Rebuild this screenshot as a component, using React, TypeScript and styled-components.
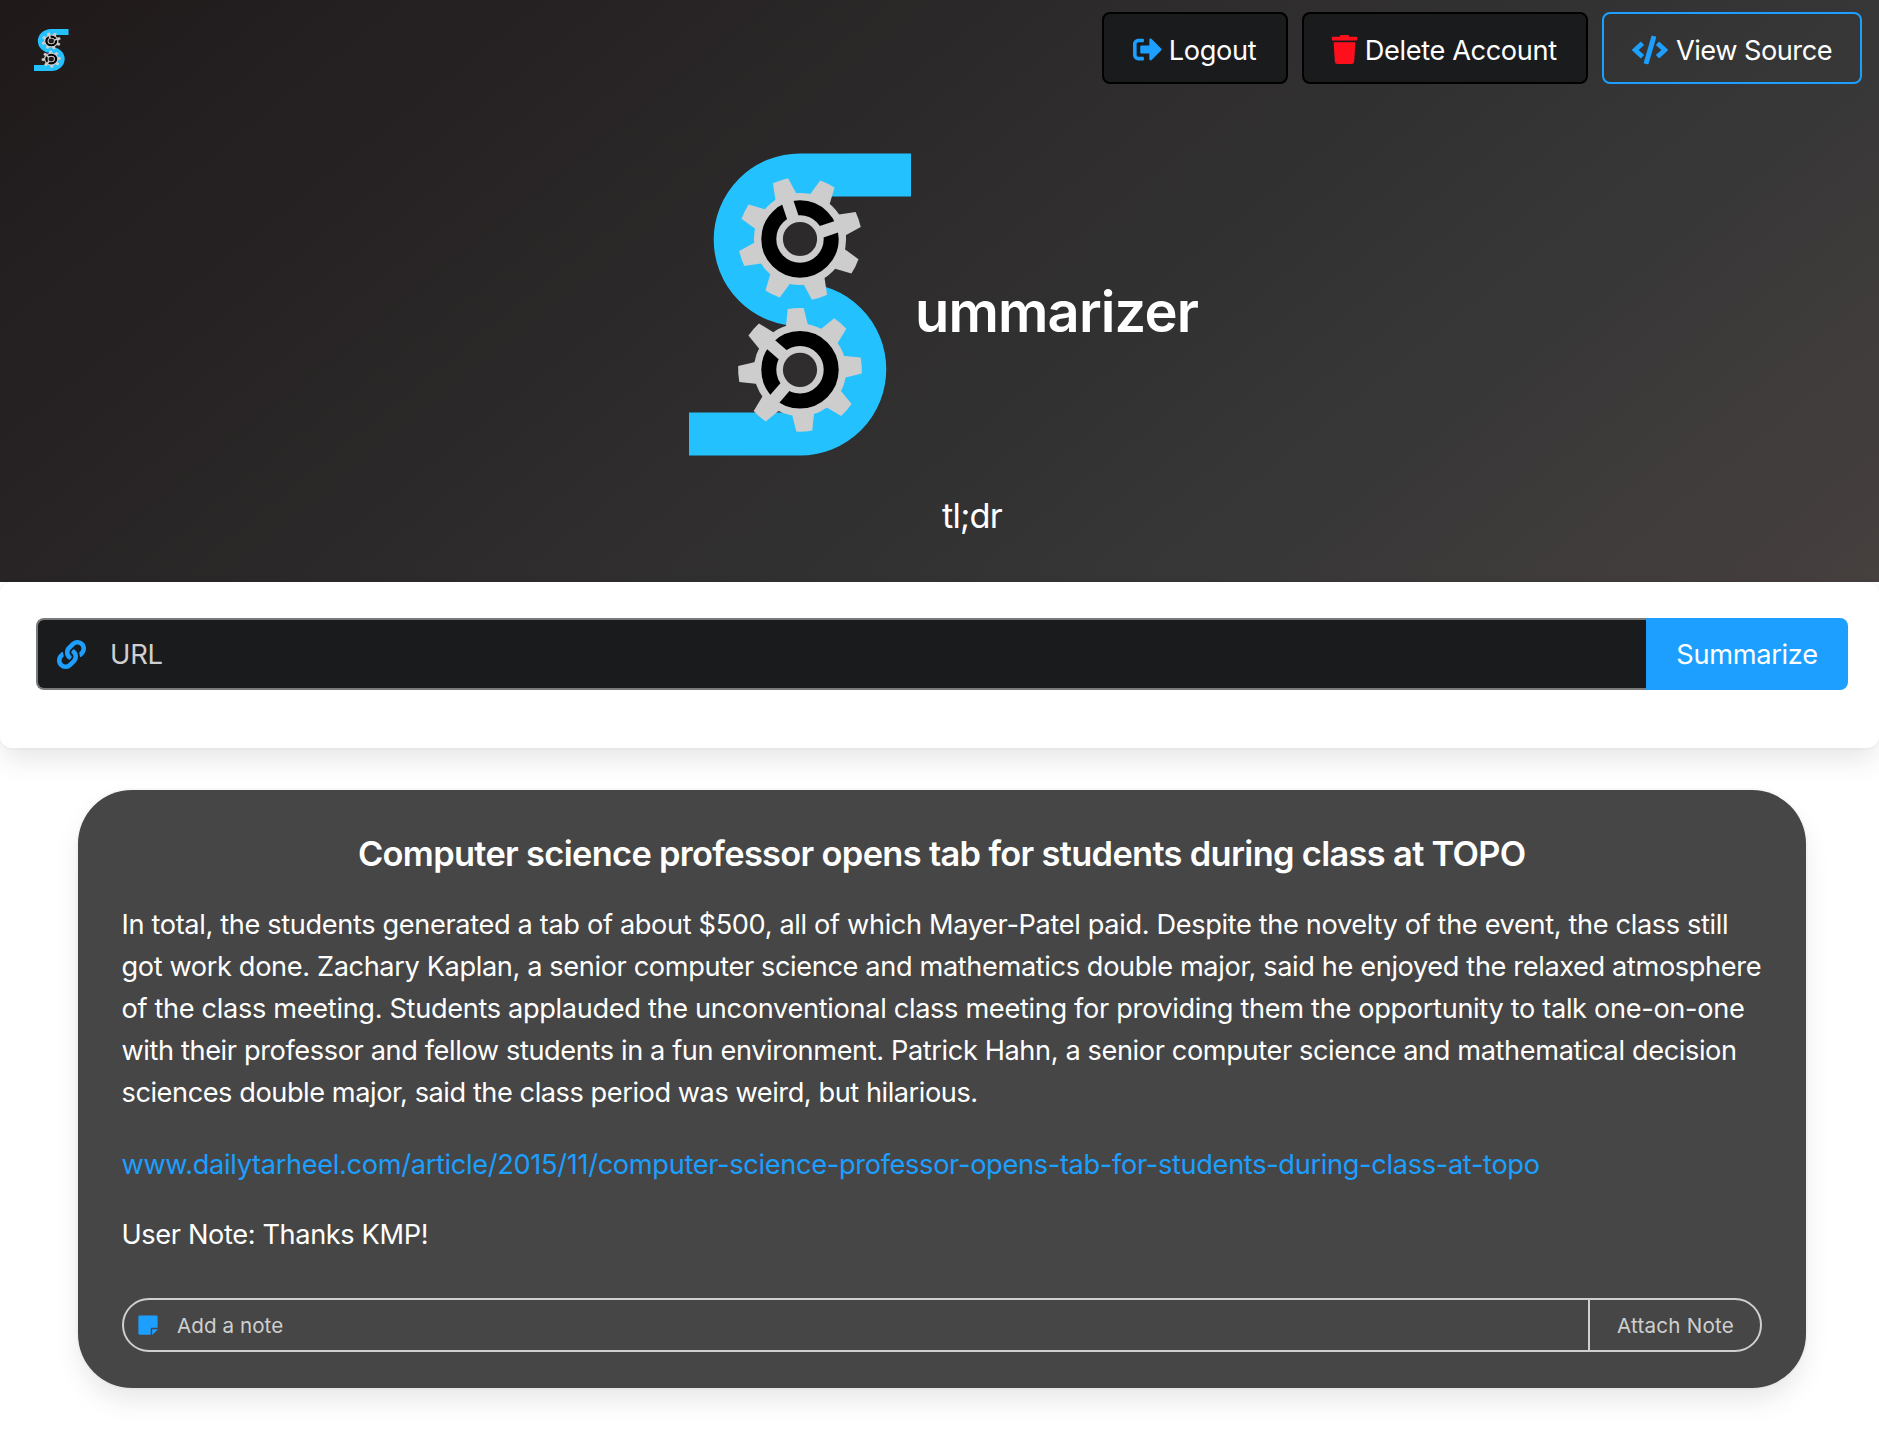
import React from 'react';
import styled, { createGlobalStyle } from 'styled-components';
import { FaSignOutAlt, FaTrash, FaCode, FaLink, FaStickyNote } from 'react-icons/fa';

const GlobalStyle = createGlobalStyle`
  *, *::before, *::after { box-sizing: border-box; }
  body {
    margin: 0;
    background: #fff;
    color: #fff;
    font-family: Inter, "Liberation Sans", sans-serif;
    font-size: 27.2px;
    line-height: 42px;
    -webkit-font-smoothing: antialiased;
  }
`;

const Page = styled.div`
  min-height: 1440px;
  padding-bottom: 52px;
`;

const Hero = styled.header`
  height: 582px;
  padding: 12px 17px 0 34px;
  background: linear-gradient(141deg, #1f191a 0%, #363636 71%, #46403f 100%);
`;

const NavBar = styled.nav`
  display: flex;
  justify-content: space-between;
  height: 72px;
`;

const Brand = styled.a`
  padding-top: 16.5px;
  line-height: 0;
`;

const NavButtons = styled.div`
  display: flex;
  gap: 14px;
`;

const NavButton = styled.button<{ $outlined?: boolean; $width: number; $spacing: number; $endPad?: number }>`
  display: flex;
  align-items: center;
  justify-content: center;
  width: ${(p) => p.$width}px;
  height: 72px;
  padding: 5px ${(p) => p.$endPad ?? 0}px 0 0;
  border: 2px solid ${(p) => (p.$outlined ? '#1c9fff' : '#000')};
  border-radius: 8px;
  background: ${(p) => (p.$outlined ? 'transparent' : '#1a1b1d')};
  color: #fff;
  font: inherit;
  letter-spacing: ${(p) => p.$spacing}px;
  white-space: pre;
`;

const ButtonIcon = styled.span<{ $color: string; $gap: number }>`
  display: flex;
  margin-right: ${(p) => p.$gap}px;
  padding-bottom: 2px;
  color: ${(p) => p.$color};
  font-size: 29px;
`;

const HeroTitle = styled.h1`
  display: flex;
  align-items: flex-start;
  margin: 68.6px 0 0 655px;
  font-size: 56px;
  font-weight: 600;
  line-height: 64px;
`;

const TitleText = styled.span`
  margin: 127px 0 0 4px;
  letter-spacing: -0.85px;
`;

const Tagline = styled.p`
  margin: 36.4px 0 0 908px;
  font-size: 34.4px;
  line-height: 48px;
  letter-spacing: -0.8px;
`;

const raised = `
  box-shadow: 0 14px 28px -3.5px rgba(10, 10, 10, 0.1), 0 0 0 2px rgba(10, 10, 10, 0.02);
`;

const SearchBox = styled.section`
  height: 166px;
  padding: 36px 31px 0 36px;
  border-radius: 12px;
  background: #fff;
  ${raised}
`;

const SearchForm = styled.form`
  display: flex;
  height: 72px;
`;

const UrlField = styled.label`
  flex: 1;
  display: flex;
  align-items: center;
  padding-left: 19px;
  border: 2px solid #7a7a7a;
  border-right: 0;
  border-radius: 8px 0 0 8px;
  background: #1a1b1d;
  color: #1c9fff;
  font-size: 29px;
`;

const TextInput = styled.input<{ $size: number; $indent: number; $spacing: number }>`
  flex: 1;
  min-width: 0;
  padding: 0 0 0 ${(p) => p.$indent}px;
  border: 0;
  outline: 0;
  background: transparent;
  color: #fff;
  font-family: inherit;
  font-size: ${(p) => p.$size}px;
  letter-spacing: ${(p) => p.$spacing}px;
  &::placeholder { color: #cfcfcf; opacity: 1; }
`;

const SummarizeButton = styled.button`
  width: 202px;
  padding: 2px 0 0;
  border: 0;
  border-radius: 0 8px 8px 0;
  background: #1c9fff;
  color: #fff;
  font: inherit;
  letter-spacing: -0.3px;
`;

const Card = styled.article`
  height: 598px;
  margin: 42px 73px 0 78px;
  padding: 42px 44px 0 43.5px;
  border-radius: 54px;
  background: #464646;
  ${raised}
`;

const CardTitle = styled.h2`
  margin: 0 0 28px;
  font-size: 34.4px;
  font-weight: 600;
  line-height: 44px;
  text-align: center;
  letter-spacing: -0.67px;
  white-space: nowrap;
`;

const Line = styled.span<{ $spacing: number }>`
  display: block;
  white-space: nowrap;
  letter-spacing: ${(p) => p.$spacing}px;
`;

const Paragraph = styled.p<{ $gap?: number }>`
  margin: 0 0 ${(p) => p.$gap ?? 28}px;
`;

const SourceLink = styled.a`
  color: #1c9fff;
  text-decoration: none;
`;

const NoteForm = styled.form`
  display: flex;
  height: 54px;
  margin-top: 42px;
  border: 2px solid #cfcfcf;
  border-radius: 27px;
  overflow: hidden;
`;

const NoteField = styled.label`
  flex: 1;
  display: flex;
  align-items: center;
  padding-left: 13px;
  color: #1c9fff;
  font-size: 22px;
`;

const AttachButton = styled.button`
  width: 172px;
  padding: 0 0 0 1px;
  border: 0;
  border-left: 2px solid #cfcfcf;
  background: transparent;
  color: #cfcfcf;
  font-family: inherit;
  font-size: 20.6px;
  letter-spacing: 0.2px;
`;

const Gear = ({ y, angle, spokes }: { y: number; angle: number; spokes: number[] }) => (
  <g transform={`translate(111 ${y})`}>
    <circle r="31.2" fill="none" stroke="#000" strokeWidth="16" />
    <circle r="42.4" fill="none" stroke="#cdcdcd" strokeWidth="7.4" />
    <circle r="20.4" fill="none" stroke="#cdcdcd" strokeWidth="6.6" />
    {Array.from({ length: 8 }, (_, i) => (
      <path
        key={i}
        transform={`rotate(${angle + i * 45})`}
        d="M43 -11.2 L61.4 -8 Q62.3 0 61.4 8 L43 11.2 Z"
        fill="#cdcdcd"
      />
    ))}
    {spokes.map((a) => (
      <path key={a} transform={`rotate(${a})`} d="M22 -6 H42 V6 H22 Z" fill="#cdcdcd" />
    ))}
  </g>
);

const Logo = ({ width, height }: { width: number; height: number }) => (
  <svg width={width} height={height} viewBox="0 0 222 303" preserveAspectRatio="none" overflow="visible">
    <path
      d="M222 21.9 H111 A64.8 64.8 0 0 0 111 151.5 A64.8 64.8 0 0 1 111 281.1 H0"
      fill="none"
      stroke="#23c2ff"
      strokeWidth="43"
    />
    <Gear y={86} angle={-18.5} spokes={[-108.5, -18.5]} />
    <Gear y={216.8} angle={-4} spokes={[-139, 131]} />
  </svg>
);

const summary: [string, number][] = [
  ['In total, the students generated a tab of about $500, all of which Mayer-Patel paid. Despite the novelty of the event, the class still', -0.36],
  ['got work done. Zachary Kaplan, a senior computer science and mathematics double major, said he enjoyed the relaxed atmosphere', -0.382],
  ['of the class meeting. Students applauded the unconventional class meeting for providing them the opportunity to talk one-on-one', -0.337],
  ['with their professor and fellow students in a fun environment. Patrick Hahn, a senior computer science and mathematical decision', -0.394],
  ['sciences double major, said the class period was weird, but hilarious.', -0.45],
];

export default function App() {
  return (
    <Page>
      <GlobalStyle />
      <Hero>
        <NavBar>
          <Brand><Logo width={34.5} height={42} /></Brand>
          <NavButtons>
            <NavButton $width={186} $spacing={-0.35} $endPad={1}>
              <ButtonIcon $color="#1c9fff" $gap={7}><FaSignOutAlt /></ButtonIcon>Logout
            </NavButton>
            <NavButton $width={286} $spacing={-0.38} $endPad={3}>
              <ButtonIcon $color="#ff0f1c" $gap={5.5}><FaTrash /></ButtonIcon>Delete Account
            </NavButton>
            <NavButton $width={260} $spacing={-0.5} $outlined>
              <ButtonIcon $color="#1c9fff" $gap={8}><FaCode size={36} /></ButtonIcon>View Source
            </NavButton>
          </NavButtons>
        </NavBar>
        <HeroTitle>
          <Logo width={222} height={303} />
          <TitleText>ummarizer</TitleText>
        </HeroTitle>
        <Tagline>tl;dr</Tagline>
      </Hero>
      <SearchBox>
        <SearchForm>
          <UrlField>
            <FaLink />
            <TextInput placeholder="URL" $size={27.4} $indent={24} $spacing={-0.2} />
          </UrlField>
          <SummarizeButton type="button">Summarize</SummarizeButton>
        </SearchForm>
      </SearchBox>
      <Card>
        <CardTitle>Computer science professor opens tab for students during class at TOPO</CardTitle>
        <Paragraph $gap={30}>
          {summary.map(([text, spacing]) => <Line key={text} $spacing={spacing}>{text}</Line>)}
        </Paragraph>
        <Paragraph>
          <SourceLink><Line $spacing={-0.327}>www.dailytarheel.com/article/2015/11/computer-science-professor-opens-tab-for-students-during-class-at-topo</Line></SourceLink>
        </Paragraph>
        <Paragraph><Line $spacing={-0.38}>User Note: Thanks KMP!</Line></Paragraph>
        <NoteForm>
          <NoteField>
            <FaStickyNote />
            <TextInput placeholder="Add a note" $size={20.6} $indent={18.5} $spacing={0.06} />
          </NoteField>
          <AttachButton type="button">Attach Note</AttachButton>
        </NoteForm>
      </Card>
    </Page>
  );
}
